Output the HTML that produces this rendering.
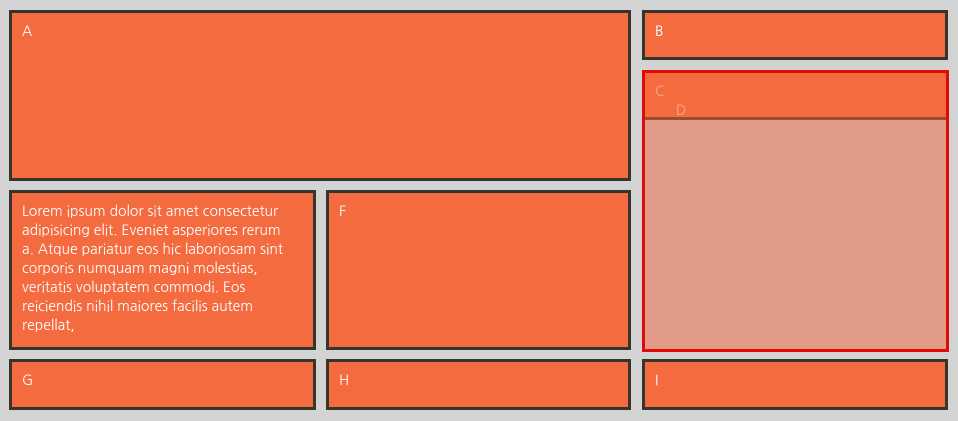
<!DOCTYPE html>
<html><head><style>
body{margin:0;width:958px;height:421px;background:#d3d3d3;position:relative;overflow:hidden;font-family:"NanumGothic","Liberation Sans",sans-serif;color:#fff;font-size:14px}
.b{position:absolute;box-sizing:border-box;background:#f46b40;border:3px solid #35352c;padding:10px 10px;line-height:19px}
</style></head><body>
<div class="b" style="left:9px;top:10px;width:622px;height:171px">A</div>
<div class="b" style="left:642px;top:10px;width:306px;height:50px">B</div>
<div class="b" style="left:642px;top:70px;width:307px;height:282px;border-color:#e00a08;padding:0;background:#e29b86">
 <div style="height:44px;background:#f46b40;border-bottom:3px solid #9a4d30;position:relative">
  <span style="position:absolute;left:10px;top:10px;color:#f9a98e">C</span>
  <span style="position:absolute;left:31px;top:29px;color:#f9a98e">D</span>
 </div>
</div>
<div class="b" style="left:9px;top:190px;width:307px;height:160px;white-space:nowrap">Lorem ipsum dolor sit amet consectetur<br>adipisicing elit. Eveniet asperiores rerum<br>a. Atque pariatur eos hic laboriosam sint<br>corporis numquam magni molestias,<br>veritatis voluptatem commodi. Eos<br>reiciendis nihil maiores facilis autem<br>repellat,</div>
<div class="b" style="left:326px;top:190px;width:305px;height:160px">F</div>
<div class="b" style="left:9px;top:359px;width:307px;height:51px">G</div>
<div class="b" style="left:326px;top:359px;width:305px;height:51px">H</div>
<div class="b" style="left:642px;top:359px;width:306px;height:51px">I</div>
</body></html>
